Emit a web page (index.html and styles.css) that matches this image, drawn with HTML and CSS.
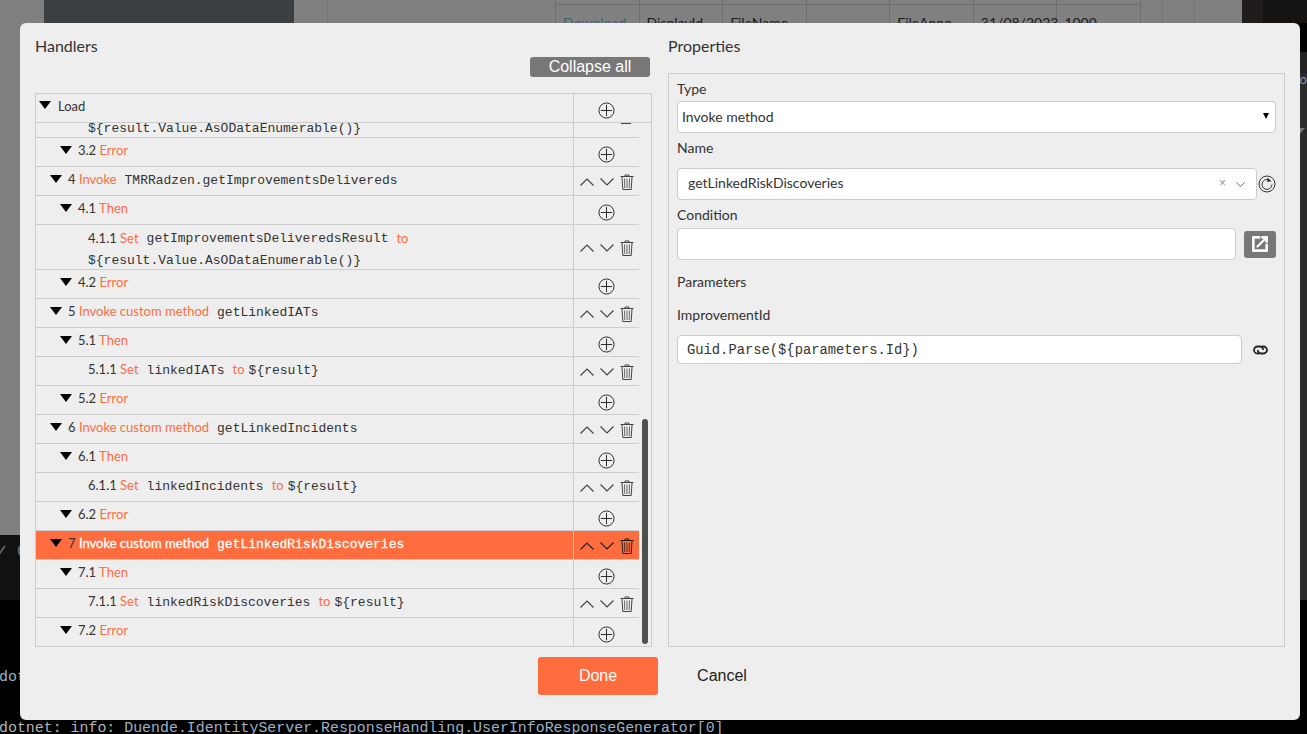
FILE: index.html
```html
<!DOCTYPE html>
<html>
<head>
  <title>Handlers</title>
  <link rel="stylesheet" href="styles.css">
</head>
<body>
  <svg class="icon-defs" width="0" height="0">
    <symbol id="i-plus" viewBox="0 0 18 18">
      <circle cx="9" cy="9" r="8" fill="none" stroke="currentColor" stroke-width="1"/>
      <path d="M9 3v12M3 9h12" fill="none" stroke="currentColor" stroke-width="1"/>
    </symbol>
    <symbol id="i-up" viewBox="0 0 16 10">
      <path d="M1.5 8.5L8 2l6.5 6.5" fill="none" stroke="currentColor" stroke-width="1.2"/>
    </symbol>
    <symbol id="i-down" viewBox="0 0 16 10">
      <path d="M1.5 1.5L8 8l6.5-6.5" fill="none" stroke="currentColor" stroke-width="1.2"/>
    </symbol>
    <symbol id="i-trash" viewBox="0 0 14 16">
      <path d="M0.5 2.5h13M5 2.5V1h4v1.5" fill="none" stroke="currentColor" stroke-width="1"/>
      <path d="M2 3l0.8 12.5h8.4L12 3" fill="none" stroke="currentColor" stroke-width="1"/>
      <path d="M4.5 4.5l0.3 9.5M7 4.5V14M9.5 4.5l-0.3 9.5" fill="none" stroke="currentColor" stroke-width="0.8"/>
    </symbol>
  </svg>

  <div class="backdrop">
    <div class="page-top">
      <div class="page-left">
        <div class="page-upper">
          <div class="page-gutter"></div>
          <div class="page-side"></div>
          <div class="page-main">
            <div class="rule-a"></div>
            <table class="bg-table">
              <tr class="bg-head"><td></td><td></td><td></td><td></td><td></td><td></td><td></td></tr>
              <tr>
                <td class="bg-link">Download</td><td>DisplayId</td><td>FileName</td><td></td><td>FileAnno</td><td>31/08/2023</td><td>1000</td>
              </tr>
            </table>
            <div class="rule-b"></div>
            <div class="rule-c"></div>
          </div>
          <div class="page-dark"></div>
        </div>
        <div class="term-bar"><span class="term-check">✓</span><span class="term-c">C</span></div>
      </div>
      <div class="page-right">
        <div class="strip-a"></div>
        <div class="strip-b"></div>
        <div class="strip-c"></div>
        <div class="strip-d"><span class="strip-text">Lo</span><i class="strip-arrow"></i></div>
      </div>
    </div>
    <div class="terminal">
      <div class="term-line term-short">dot</div>
      <div class="term-line">dotnet: info: <span class="term-blue">Duende.IdentityServer.ResponseHandling.UserInfoResponseGenerator[0]</span></div>
    </div>
  </div>

  <div class="dialog">
    <div class="dialog-body">
      <section class="handlers">
        <div class="section-title">Handlers</div>
        <div class="collapse-row"><button class="btn-collapse">Collapse all</button></div>
        <div class="tree">
          <div class="tree-head">
            <div class="cell-label"><i class="caret"></i><span>Load</span></div>
            <div class="cell-actions"><svg class="ic-plus"><use href="#i-plus"/></svg></div>
          </div>
          <div class="tree-scroll">
            <div class="rows">
              <div class="row row-tail">
                <div class="cell-label lvl-3"><code>${result.Value.AsODataEnumerable()}</code></div>
                <div class="cell-actions"><span class="trash-tail"></span></div>
              </div>
              <div class="row">
                <div class="cell-label lvl-1"><i class="caret"></i><span>3.2 <em>Error</em></span></div>
                <div class="cell-actions"><svg class="ic-plus"><use href="#i-plus"/></svg></div>
              </div>
              <div class="row">
                <div class="cell-label lvl-0"><i class="caret"></i><span>4 <em>Invoke</em></span><code>TMRRadzen.getImprovementsDelivereds</code></div>
                <div class="cell-actions move"><svg class="ic-up"><use href="#i-up"/></svg><svg class="ic-down"><use href="#i-down"/></svg><svg class="ic-trash"><use href="#i-trash"/></svg></div>
              </div>
              <div class="row">
                <div class="cell-label lvl-1"><i class="caret"></i><span>4.1 <em>Then</em></span></div>
                <div class="cell-actions"><svg class="ic-plus"><use href="#i-plus"/></svg></div>
              </div>
              <div class="row row-tall">
                <div class="cell-label lvl-2 wrap"><span>4.1.1 <em>Set</em></span><code>getImprovementsDeliveredsResult</code><span><em>to</em></span><code class="nl">${result.Value.AsODataEnumerable()}</code></div>
                <div class="cell-actions move"><svg class="ic-up"><use href="#i-up"/></svg><svg class="ic-down"><use href="#i-down"/></svg><svg class="ic-trash"><use href="#i-trash"/></svg></div>
              </div>
              <div class="row">
                <div class="cell-label lvl-1"><i class="caret"></i><span>4.2 <em>Error</em></span></div>
                <div class="cell-actions"><svg class="ic-plus"><use href="#i-plus"/></svg></div>
              </div>
              <div class="row">
                <div class="cell-label lvl-0"><i class="caret"></i><span>5 <em>Invoke custom method</em></span><code>getLinkedIATs</code></div>
                <div class="cell-actions move"><svg class="ic-up"><use href="#i-up"/></svg><svg class="ic-down"><use href="#i-down"/></svg><svg class="ic-trash"><use href="#i-trash"/></svg></div>
              </div>
              <div class="row">
                <div class="cell-label lvl-1"><i class="caret"></i><span>5.1 <em>Then</em></span></div>
                <div class="cell-actions"><svg class="ic-plus"><use href="#i-plus"/></svg></div>
              </div>
              <div class="row">
                <div class="cell-label lvl-2"><span>5.1.1 <em>Set</em></span><code>linkedIATs</code><span><em>to</em></span><code class="tight">${result}</code></div>
                <div class="cell-actions move"><svg class="ic-up"><use href="#i-up"/></svg><svg class="ic-down"><use href="#i-down"/></svg><svg class="ic-trash"><use href="#i-trash"/></svg></div>
              </div>
              <div class="row">
                <div class="cell-label lvl-1"><i class="caret"></i><span>5.2 <em>Error</em></span></div>
                <div class="cell-actions"><svg class="ic-plus"><use href="#i-plus"/></svg></div>
              </div>
              <div class="row">
                <div class="cell-label lvl-0"><i class="caret"></i><span>6 <em>Invoke custom method</em></span><code>getLinkedIncidents</code></div>
                <div class="cell-actions move"><svg class="ic-up"><use href="#i-up"/></svg><svg class="ic-down"><use href="#i-down"/></svg><svg class="ic-trash"><use href="#i-trash"/></svg></div>
              </div>
              <div class="row">
                <div class="cell-label lvl-1"><i class="caret"></i><span>6.1 <em>Then</em></span></div>
                <div class="cell-actions"><svg class="ic-plus"><use href="#i-plus"/></svg></div>
              </div>
              <div class="row">
                <div class="cell-label lvl-2"><span>6.1.1 <em>Set</em></span><code>linkedIncidents</code><span><em>to</em></span><code class="tight">${result}</code></div>
                <div class="cell-actions move"><svg class="ic-up"><use href="#i-up"/></svg><svg class="ic-down"><use href="#i-down"/></svg><svg class="ic-trash"><use href="#i-trash"/></svg></div>
              </div>
              <div class="row">
                <div class="cell-label lvl-1"><i class="caret"></i><span>6.2 <em>Error</em></span></div>
                <div class="cell-actions"><svg class="ic-plus"><use href="#i-plus"/></svg></div>
              </div>
              <div class="row row-selected">
                <div class="cell-label lvl-0"><i class="caret"></i><span>7 <em>Invoke custom method</em></span><code>getLinkedRiskDiscoveries</code></div>
                <div class="cell-actions move"><svg class="ic-up"><use href="#i-up"/></svg><svg class="ic-down"><use href="#i-down"/></svg><svg class="ic-trash"><use href="#i-trash"/></svg></div>
              </div>
              <div class="row">
                <div class="cell-label lvl-1"><i class="caret"></i><span>7.1 <em>Then</em></span></div>
                <div class="cell-actions"><svg class="ic-plus"><use href="#i-plus"/></svg></div>
              </div>
              <div class="row">
                <div class="cell-label lvl-2"><span>7.1.1 <em>Set</em></span><code>linkedRiskDiscoveries</code><span><em>to</em></span><code class="tight">${result}</code></div>
                <div class="cell-actions move"><svg class="ic-up"><use href="#i-up"/></svg><svg class="ic-down"><use href="#i-down"/></svg><svg class="ic-trash"><use href="#i-trash"/></svg></div>
              </div>
              <div class="row row-last">
                <div class="cell-label lvl-1"><i class="caret"></i><span>7.2 <em>Error</em></span></div>
                <div class="cell-actions"><svg class="ic-plus"><use href="#i-plus"/></svg></div>
              </div>
            </div>
            <div class="scroll-track"><div class="scroll-thumb"></div></div>
          </div>
        </div>
      </section>

      <section class="properties">
        <div class="section-title">Properties</div>
        <div class="prop-panel">
          <label class="prop-label first">Type</label>
          <div class="field field-select"><span>Invoke method</span><span class="select-arrow"></span></div>
          <label class="prop-label">Name</label>
          <div class="field-row name-row">
            <div class="field field-combo">
              <span>getLinkedRiskDiscoveries</span>
              <span class="combo-clear">×</span>
              <svg class="combo-chevron" viewBox="0 0 16 10"><path d="M2 2l6 6 6-6" fill="none" stroke="currentColor" stroke-width="1.2"/></svg>
            </div>
            <svg class="ic-refresh" viewBox="0 0 18 18">
              <circle cx="9" cy="9" r="8" fill="none" stroke="#333" stroke-width="1"/>
              <path d="M12.8 6.2A5 5 0 1 0 14 9.5" fill="none" stroke="#333" stroke-width="1"/>
              <path d="M9.5 2.5l3.8 3.8-4.3 0.7z" fill="#333"/>
            </svg>
          </div>
          <label class="prop-label cond">Condition</label>
          <div class="field-row cond-row">
            <div class="field field-cond"></div>
            <button class="btn-open">
              <svg viewBox="0 0 24 24"><path d="M19 19H5V5h7V3H3v18h18v-9h-2v7zM14 3v2h3.59l-9.83 9.83 1.41 1.41L19 6.41V10h2V3h-7z" fill="#fff" stroke="#fff" stroke-width="1"/></svg>
            </button>
          </div>
          <div class="prop-label params">Parameters</div>
          <label class="prop-label imp">ImprovementId</label>
          <div class="field-row param-row">
            <div class="field field-param"><code>Guid.Parse(${parameters.Id})</code></div>
            <svg class="ic-link" viewBox="0 0 15 10">
              <path d="M6 8.5H4.5a3.5 3.5 0 0 1 0-7H7a3 3 0 0 1 3 3.5" fill="none" stroke="#222" stroke-width="1.8"/>
              <path d="M9 1.5h1.5a3.5 3.5 0 0 1 0 7H8a3 3 0 0 1-3-3.500" fill="none" stroke="#222" stroke-width="1.8"/>
            </svg>
          </div>
        </div>
      </section>
    </div>

    <div class="dialog-footer">
      <button class="btn-done">Done</button>
      <button class="btn-cancel">Cancel</button>
    </div>
  </div>
</body>
</html>
```

FILE: styles.css
```css
:root {
  --panel: #eeeeee;
  --line: #cccccc;
  --accent: #ff6d3f;
  --grey-btn: #777777;
  --text: #333333;
}

* {
  box-sizing: border-box;
}

html, body {
  margin: 0;
  height: 100%;
  overflow: hidden;
}

body {
  font-family: 'Lato', sans-serif;
  font-size: 14px;
  color: var(--text);
  background: #000;
}

.icon-defs {
  position: absolute;
}

/* dimmed page behind the dialog */
.backdrop {
  height: 734px;
  display: flex;
  flex-direction: column;
}

.page-top {
  height: 600px;
  display: flex;
}

.page-left {
  width: 1270px;
  display: flex;
  flex-direction: column;
}

.page-upper {
  height: 535px;
  display: flex;
  background: #7f7f7f;
}

.page-gutter {
  width: 44px;
}

.page-side {
  width: 250px;
  background: #3c3f41;
}

.page-main {
  width: 948px;
  display: flex;
  align-items: flex-start;
  background: #808080;
}

.rule-a {
  width: 34px;
  height: 100%;
  border-right: 1px solid #777;
}

.rule-b {
  width: 22px;
  height: 100%;
  border-right: 1px solid #777;
}

.rule-c {
  width: 32px;
  height: 100%;
  border-right: 1px solid #777;
}

.page-dark {
  flex: 1;
  background: #1f1c1b;
}

.page-right {
  flex: 1;
  display: flex;
  flex-direction: column;
}

.strip-a {
  height: 23px;
  background: #151412;
}

.strip-b {
  height: 29px;
  background: #000;
}

.strip-c {
  height: 21px;
  background: #222;
}

.strip-d {
  flex: 1;
  background: #2b2b2b;
  padding-left: 30px;
  display: flex;
  flex-direction: column;
  align-items: flex-start;
  color: #8a97a8;
  font-size: 13px;
}

.strip-text {
  line-height: 14px;
  margin-top: -1px;
}

.strip-arrow {
  width: 0;
  height: 0;
  margin-top: 42px;
  border-left: 6px solid transparent;
  border-right: 6px solid transparent;
  border-top: 7px solid #777;
}

.bg-table {
  border-collapse: collapse;
  width: 586px;
  margin-left: 227px;
  table-layout: fixed;
  font-family: 'Lato', sans-serif;
  font-size: 14px;
  color: #1c1c1c;
}

.bg-table td {
  border: 1px solid #6e6e6e;
  padding: 0 8px 0 7px;
  height: 36px;
}

.bg-table .bg-head td {
  height: 4px;
  border-top: none;
}

.bg-link {
  color: #3a6670;
}

.term-bar {
  height: 65px;
  background: #111;
  padding: 5px 0 0 0;
  font-family: 'Liberation Sans', sans-serif;
  font-size: 18px;
  color: #6f6f6f;
  overflow: hidden;
  white-space: nowrap;
}

.term-check {
  margin-left: -6px;
}

.term-c {
  margin-left: 8px;
}

.terminal {
  flex: 1;
  font-family: 'Liberation Mono', monospace;
  font-size: 14.92px;
  color: #b4b4b4;
  margin-left: -1px;
  white-space: nowrap;
}

.term-line {
  line-height: 17px;
}

.term-short {
  margin-top: 69px;
  margin-bottom: 34px;
  color: #9fb0c4;
}

.term-blue {
  color: #9fb0c4;
}

/* dialog */
.dialog {
  position: absolute;
  left: 20px;
  top: 23px;
  width: 1280px;
  height: 697px;
  background: var(--panel);
  border-radius: 6px;
  padding: 0 15px;
  display: flex;
  flex-direction: column;
}

.dialog-body {
  display: flex;
  height: 624px;
  gap: 16px;
}

.handlers {
  width: 617px;
  display: flex;
  flex-direction: column;
}

.properties {
  width: 617px;
  display: flex;
  flex-direction: column;
}

.section-title {
  font-size: 16px;
  line-height: 20px;
  margin-top: 13px;
  color: #333;
}

.collapse-row {
  display: flex;
  justify-content: flex-end;
  padding-right: 2px;
  margin-top: 1px;
}

.btn-collapse {
  width: 120px;
  height: 20px;
  background: var(--grey-btn);
  color: #fff;
  border: none;
  border-radius: 3px;
  padding: 0;
  font-family: 'Liberation Sans', sans-serif;
  font-size: 16px;
  line-height: 20px;
}

.tree {
  margin-top: 16px;
  width: 617px;
  height: 554px;
  border: 1px solid var(--line);
  display: flex;
  flex-direction: column;
  font-size: 13px;
}

.tree-head {
  height: 29px;
  display: flex;
  flex: none;
  border-bottom: 1px solid var(--line);
}

.tree-scroll {
  flex: 1;
  display: flex;
}

.rows {
  width: 603px;
  flex: none;
}

.scroll-track {
  flex: 1;
  display: flex;
  flex-direction: column;
  justify-content: flex-end;
  align-items: center;
  padding-bottom: 3px;
}

.scroll-thumb {
  width: 6px;
  height: 225px;
  background: #4f4f4f;
  border-radius: 3px;
}

.row {
  display: flex;
  height: 29px;
  border-bottom: 1px solid var(--line);
}

.row-tall {
  height: 45px;
}

.row-tail {
  height: 15px;
}

.row-last {
  border-bottom: none;
}

.row-last .cell-label {
  padding-bottom: 5px;
}

.cell-label {
  width: 537px;
  flex: none;
  display: flex;
  align-items: center;
  white-space: nowrap;
  padding-left: 3px;
  padding-bottom: 4px;
}

.tree-head .cell-label {
  padding-bottom: 5px;
}

.tree-head .caret {
  margin-right: 7px;
}

.cell-actions {
  flex: none;
  width: 66px;
  height: 100%;
  border-left: 1px solid var(--line);
  display: flex;
  justify-content: center;
  align-items: center;
  color: #444;
}

.tree-head .cell-actions {
  width: 78px;
  padding-right: 12px;
}

.lvl-0 {
  padding-left: 14px;
}

.lvl-1 {
  padding-left: 24px;
}

.lvl-2 {
  padding-left: 52px;
}

.lvl-3 {
  padding-left: 52px;
  padding-bottom: 1px;
  align-items: flex-end;
}

.wrap {
  flex-wrap: wrap;
  align-content: center;
  padding-bottom: 0;
  padding-top: 4px;
}

.caret {
  width: 0;
  height: 0;
  border-left: 6.5px solid transparent;
  border-right: 6.5px solid transparent;
  border-top: 8px solid #000;
  margin-right: 6px;
  margin-top: -1px;
}

.cell-label em {
  font-style: normal;
  color: var(--accent);
}

code {
  font-family: 'Liberation Mono', monospace;
  font-size: 13px;
  color: #333;
  margin-left: 8px;
  margin-top: 2px;
}

.lvl-3 code {
  margin-left: 0;
  margin-top: 0;
  line-height: 14px;
}

code.nl {
  width: 100%;
  margin-left: 0;
  margin-top: 0;
  line-height: 22px;
}

.wrap span, .wrap code {
  line-height: 22px;
}

.cell-label span + code + span {
  margin-left: 8px;
}

code.tight {
  margin-left: 4px;
}

.ic-plus {
  width: 17px;
  height: 17px;
  color: #222;
  margin-top: 4px;
}

.ic-up, .ic-down {
  width: 16px;
  height: 10px;
}

.ic-up {
  margin-right: 4px;
}

.ic-down {
  margin-right: 5px;
}

.ic-trash {
  width: 14px;
  height: 16px;
}

.move {
  padding-top: 2px;
}

.trash-tail {
  width: 10px;
  height: 1px;
  background: #444;
  margin: -13px 0 0 39px;
}

.row-selected {
  background: var(--accent);
}

.row-selected em {
  color: #fff;
  -webkit-text-stroke: 0.3px #fff;
}

.row-selected code {
  color: #fff;
  -webkit-text-stroke: 0.3px #fff;
}

.row-selected .cell-actions {
  color: #222;
}

/* properties panel */
.prop-panel {
  margin-top: 17px;
  height: 574px;
  border: 1px solid var(--line);
  padding: 0 8px;
  display: flex;
  flex-direction: column;
}

.prop-label {
  display: block;
  line-height: 18px;
  color: #333;
}

.prop-label.first {
  margin-top: 6px;
  margin-bottom: 3px;
}

.field {
  background: #fff;
  border: 1px solid var(--line);
  border-radius: 4px;
  display: flex;
  align-items: center;
  color: #333;
}

.field-select {
  height: 32px;
  width: 599px;
  padding: 0 5px 2px 4px;
  justify-content: space-between;
  margin-bottom: 6px;
}

.select-arrow {
  width: 0;
  height: 0;
  border-left: 3.5px solid transparent;
  border-right: 3.5px solid transparent;
  border-top: 6px solid #000;
  margin-right: 1px;
}

.field-row {
  display: flex;
  align-items: center;
}

.name-row {
  margin-top: 11px;
}

.field-combo {
  width: 580px;
  height: 32px;
  padding: 0 10px 3px 10px;
}

.combo-clear {
  margin-left: auto;
  font-size: 12px;
  color: #999;
  margin-right: 9px;
  font-family: 'Liberation Sans', sans-serif;
}

.combo-chevron {
  width: 11px;
  height: 7px;
  margin-top: 3px;
  color: #555;
}

.ic-refresh {
  width: 18px;
  height: 18px;
  margin-left: 1px;
}

.prop-label.cond {
  margin-top: 6px;
  margin-bottom: 4px;
}

.field-cond {
  width: 559px;
  height: 32px;
}

.btn-open {
  width: 32px;
  height: 27px;
  margin-left: 8px;
  background: var(--grey-btn);
  border: none;
  border-radius: 3px;
  padding: 0;
  display: flex;
  align-items: center;
  justify-content: center;
}

.btn-open svg {
  width: 20px;
  height: 20px;
}

.prop-label.params {
  margin-top: 13px;
}

.prop-label.imp {
  margin-top: 15px;
}

.param-row {
  margin-top: 11px;
}

.field-param {
  width: 565px;
  height: 29px;
  padding: 1px 0 0 9px;
}

.field-param code {
  margin: 0;
  font-size: 13.8px;
}

.ic-link {
  width: 15px;
  height: 10px;
  margin-left: 11px;
}

/* footer */
.dialog-footer {
  display: flex;
  margin-top: 10px;
  padding-left: 503px;
  align-items: center;
}

.btn-done {
  width: 120px;
  height: 38px;
  background: var(--accent);
  color: #fff;
  border: none;
  border-radius: 3px;
  font-family: 'Liberation Sans', sans-serif;
  font-size: 16px;
}

.btn-cancel {
  width: 128px;
  height: 38px;
  background: none;
  border: none;
  color: #222;
  font-family: 'Liberation Sans', sans-serif;
  font-size: 16px;
}
```
